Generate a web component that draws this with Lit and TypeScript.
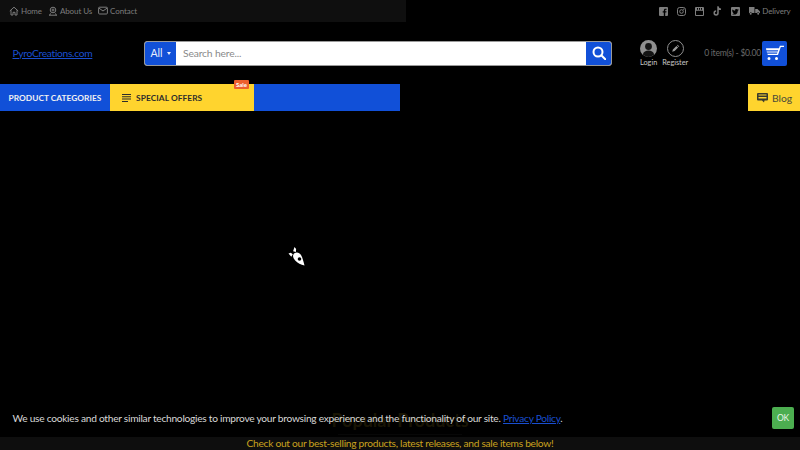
import { LitElement, html, css } from "lit";
import { customElement } from "lit/decorators.js";

@customElement("app-root")
export class AppRoot extends LitElement {
  static styles = css`
    :host { display: block; width: 800px; height: 450px; background: #000; overflow: hidden; position: relative; font-family: Lato, sans-serif; color: #888; }
    svg { display: block; flex: none; }
    a { text-decoration: none; color: inherit; }
    .top { display: flex; justify-content: space-between; height: 22px; }
    .top-left { width: 406px; background: #0f0f0f; display: flex; align-items: center; padding-left: 9px; gap: 6px; box-sizing: border-box; }
    .top-item { display: flex; align-items: center; gap: 2px; font-size: 8px; letter-spacing: -0.1px; color: #7d7d7d; padding-bottom: 1px; }
    .top-right { display: flex; align-items: center; gap: 9px; padding-right: 9.5px; color: #7d7d7d; }
    .top-right .delivery { display: flex; align-items: center; gap: 2px; font-size: 8px; letter-spacing: -0.15px; }
    .header { height: 62px; display: flex; align-items: center; }
    .logo { width: 144px; flex: none; padding-left: 12.5px; box-sizing: border-box; font-size: 10.3px; letter-spacing: -0.33px; color: #1a4fd0; text-decoration: underline; }
    .search { width: 468px; flex: none; height: 25px; border: 1px solid #9a9a9a; border-radius: 3px; box-sizing: border-box; display: flex; overflow: hidden; background: #fff; }
    .cat { width: 31px; background: #1150d8; color: #e8eefc; font-size: 10.5px; display: flex; align-items: center; justify-content: center; gap: 4px; }
    .caret { width: 0; height: 0; border-left: 2.5px solid transparent; border-right: 2.5px solid transparent; border-top: 3px solid #e8eefc; }
    .field { flex: 1; color: #8a8a8a; font-size: 10.3px; letter-spacing: -0.15px; display: flex; align-items: center; padding-left: 7px; }
    .go { width: 25px; background: #1150d8; display: flex; align-items: center; justify-content: center; }
    .account { display: flex; gap: 5px; margin-left: 28px; flex: none; }
    .acc { display: flex; flex-direction: column; align-items: center; font-size: 7.3px; color: #c8c8c8; gap: 1px; }
    .cart { display: flex; align-items: center; flex: 1; justify-content: flex-end; padding-right: 13px; font-size: 8.6px; letter-spacing: -0.27px; color: #6a6a6a; white-space: nowrap; }
    .cart-btn { width: 25px; height: 25px; background: #1150d8; border-radius: 2px; display: flex; align-items: center; justify-content: center; margin-left: 1px; }
    .nav { height: 27px; display: flex; justify-content: space-between; }
    .nav-left { width: 400px; background: #1150d8; display: flex; }
    .pc { width: 110px; display: flex; align-items: center; justify-content: center; color: #f2f2f2; font-size: 8.3px; font-weight: 700; letter-spacing: 0.05px; white-space: nowrap; }
    .so { width: 144px; background: #ffd42e; display: flex; align-items: center; padding-left: 12px; gap: 5px; box-sizing: border-box; color: #2c2c2c; font-size: 8.3px; font-weight: 700; letter-spacing: 0.1px; position: relative; }
    .sale { position: absolute; top: -4px; right: 5px; background: #ed5f2e; color: #fff; font-size: 6px; padding: 0 2px; line-height: 9px; border-radius: 1px; letter-spacing: 0; }
    .blog { width: 52px; background: #ffd42e; display: flex; align-items: center; justify-content: center; gap: 4px; color: #4a4a3a; font-size: 10.3px; padding-left: 1px; box-sizing: border-box; }
    .main { height: 326px; display: flex; justify-content: center; align-items: center; padding-right: 208px; box-sizing: border-box; padding-bottom: 35px; }
    .bottom-copy { height: 13px; background: #0e0e0e; color: #c9a21e; font-size: 10.2px; letter-spacing: -0.27px; text-align: center; line-height: 13px; white-space: nowrap; }
    .cookie { position: absolute; left: 0; right: 0; top: 398px; height: 39px; background: rgba(0,0,0,0.85); border-radius: 0 0 6px 6px; display: flex; align-items: center; justify-content: space-between; padding: 0 6px 0 12.5px; box-sizing: border-box; color: #d8d8d8; font-size: 10.2px; letter-spacing: -0.265px; }
    .cookie a { color: #1a4fd0; text-decoration: underline; }
    .ok { background: #4cae50; color: #e8f5e9; width: 22px; height: 22px; border-radius: 2px; font-size: 8.5px; display: flex; align-items: center; justify-content: center; }
    .ghost { position: absolute; left: 0; right: 0; top: 409px; text-align: center; color: #a88a20; font-size: 18px; font-weight: 700; }
    .rule { position: absolute; left: 338px; top: 434px; width: 124px; height: 1px; background: #333; }
  `;

  private home = html`<svg width="10" height="10" viewBox="0 0 10 10" fill="none" stroke="currentColor" stroke-width="1"><path d="M.8 5 5 1.200 9.200 5M2 4.200V9h2V6.300h2V9h2V4.200"/></svg>`;
  private about = html`<svg width="10" height="10" viewBox="0 0 10 10" fill="none" stroke="currentColor" stroke-width="1"><circle cx="5" cy="4" r="2.800"/><circle cx="5" cy="4" r="1"/><path d="M1 9.200h8M2.500 7.400l-.8 1.800M7.500 7.400l.8 1.800"/></svg>`;
  private mail = html`<svg width="10" height="9" viewBox="0 0 10 9" fill="none" stroke="currentColor" stroke-width="1"><rect x=".6" y="1.200" width="8.800" height="6.800" rx="1"/><path d="m.8 2 4.200 3 4.200-3"/></svg>`;

  render() {
    return html`
      <div class="top">
        <div class="top-left">
          <a class="top-item">${this.home}Home</a>
          <a class="top-item">${this.about}About Us</a>
          <a class="top-item">${this.mail}Contact</a>
        </div>
        <div class="top-right">
          <svg width="9" height="9" viewBox="0 0 9 9"><path fill="currentColor" fill-rule="evenodd" d="M1 0h7a1 1 0 0 1 1 1v7a1 1 0 0 1-1 1H6.200V5.600h1.100l.2-1.300H6.200V3.500c0-.4.2-.7.700-.7h.7V1.700H6.500c-1.100 0-1.700.7-1.700 1.700v.9H3.700v1.300h1.100V9H1a1 1 0 0 1-1-1V1a1 1 0 0 1 1-1z"/></svg>
          <svg width="9" height="9" viewBox="0 0 9 9" fill="none" stroke="currentColor" stroke-width="1"><rect x=".5" y=".5" width="8" height="8" rx="2.200"/><circle cx="4.500" cy="4.500" r="1.800"/><circle cx="6.800" cy="2.200" r=".3"/></svg>
          <svg width="9" height="9" viewBox="0 0 9 9"><path fill="currentColor" fill-rule="evenodd" d="M1 0h7a1 1 0 0 1 1 1v7a1 1 0 0 1-1 1H1a1 1 0 0 1-1-1V1a1 1 0 0 1 1-1zm0 4.200v3.300a.5.500 0 0 0 .5.500h6a.5.500 0 0 0 .5-.5V4.200a.5.500 0 0 0-.5-.5h-6a.5.500 0 0 0-.5.500zM2 1v1.800h1V1zm2 0v1.800h1V1zm2 0v1.800h1V1z"/></svg>
          <svg width="9" height="10" viewBox="0 0 9 10" fill="none" stroke="currentColor" stroke-width="1.500"><path d="M5 .3v6.700a1.900 1.900 0 1 1-1.900-1.900M5 .8c.2 1.500 1.300 2.400 3 2.500"/></svg>
          <svg width="9" height="9" viewBox="0 0 9 9"><path fill="currentColor" fill-rule="evenodd" d="M1 0h7a1 1 0 0 1 1 1v7a1 1 0 0 1-1 1H1a1 1 0 0 1-1-1V1a1 1 0 0 1 1-1zm6.600 2.600c-.3.100-.5.200-.8.200.3-.2.500-.4.600-.8-.3.200-.6.300-.9.400a1.400 1.400 0 0 0-2.400 1.300C2.900 3.600 2 3.100 1.400 2.400c-.4.700-.2 1.400.4 1.900-.2 0-.4-.1-.6-.2 0 .7.400 1.200 1.100 1.400-.2.100-.4.100-.6 0 .2.600.7.900 1.300 1-.6.400-1.200.6-2 .5 2.600 1.500 5.800.1 5.800-3.300.3-.2.600-.4.800-.7z"/></svg>
          <span class="delivery"><svg width="11" height="10" viewBox="0 0 11 10"><path fill="currentColor" d="M0 1h5.500v6H2.800a1.200 1.200 0 0 0-2.200 0H0zM6.200 3h2.300L11 5.500V7h-.6a1.300 1.300 0 0 0-2.400 0H6.200z"/><circle cx="1.700" cy="7.800" r="1" fill="currentColor"/><circle cx="9.200" cy="7.800" r="1" fill="currentColor"/></svg>Delivery</span>
        </div>
      </div>
      <div class="header">
        <a class="logo">PyroCreations.com</a>
        <div class="search">
          <div class="cat">All<span class="caret"></span></div>
          <div class="field">Search here...</div>
          <div class="go"><svg width="14" height="14" viewBox="0 0 14 14" fill="none" stroke="#fff" stroke-width="2"><circle cx="6" cy="6" r="4.500"/><path d="m9.300 9.300 4 4" stroke-linecap="round"/></svg></div>
        </div>
        <div class="account">
          <a class="acc"><svg width="17" height="17" viewBox="0 0 17 17"><circle cx="8.500" cy="8.500" r="8.500" fill="#8f8f8f"/><circle cx="8.500" cy="6.500" r="3.400" fill="#141414"/><path d="M2.800 14.500c.8-3 3-4 5.700-4s4.900 1 5.700 4a8 8 0 0 1-11.400 0z" fill="#141414"/></svg>Login</a>
          <a class="acc"><svg width="17" height="17" viewBox="0 0 17 17"><circle cx="8.500" cy="8.500" r="8" fill="none" stroke="#8f8f8f"/><path d="m5.200 11.800.7-2.400 3.500-3.500 1.700 1.700-3.500 3.500zM10 5.300l.6-.6 1.700 1.700-.6.600z" fill="#9a9a9a"/></svg>Register</a>
        </div>
        <div class="cart">0 item(s) - $0.00<div class="cart-btn"><svg width="19" height="16" viewBox="0 0 19 16"><path fill="#fff" d="M1 3.200h13l.9-2.500H19v1.200h-3.200L13 10H2.800l-.5-1.300h9.700l.4-1.100H2L1.600 6.400h11.200l.4-1.100H1.300zM4 12a1.500 1.500 0 1 1 0 3 1.500 1.500 0 0 1 0-3zm7.500 0a1.500 1.500 0 1 1 0 3 1.500 1.500 0 0 1 0-3z"/></svg></div></div>
      </div>
      <div class="nav">
        <div class="nav-left">
          <div class="pc">PRODUCT CATEGORIES</div>
          <div class="so"><svg width="9" height="8" viewBox="0 0 9 8" fill="#2c2c2c"><path d="M0 0h9v1H0zM0 2.300h9v1H0zM0 4.600h9v1H0zM0 6.900h6v1H0z"/></svg>SPECIAL OFFERS<span class="sale">Sale</span></div>
        </div>
        <div class="blog"><svg width="11" height="11" viewBox="0 0 11 11"><path fill="#3a3a2e" fill-rule="evenodd" d="M1 1h9a1 1 0 0 1 1 1v5.500a1 1 0 0 1-1 1H7.500l-.5 2-2-2H1a1 1 0 0 1-1-1V2a1 1 0 0 1 1-1zm.5 1.500v1h8v-1zm0 2.500v1.500h8V5z"/></svg>Blog</div>
      </div>
      <div class="main">
        <svg width="18" height="21" viewBox="0 0 18 21"><g fill="#fff"><path d="M7 7.500c2.500-1.800 5.500-1 7 1.500 1.700 3 2.500 6.500 3.500 10.500-3.500-1-7-2.500-9.300-5.100C6 12.100 5.300 9.500 7 7.500z"/><path d="M1.500 7.500 3.800 6.800l2 1.500-1.500 2.400zM7.500 1l1.600 2-.2 3-2.800-.8z"/></g><circle cx="12.500" cy="13" r="1.800" fill="#000"/></svg>
      </div>
      <div class="ghost">Popular Products</div>
      <div class="rule"></div>
      <div class="bottom-copy">Check out our best-selling products, latest releases, and sale items below!</div>
      <div class="cookie">
        <span>We use cookies and other similar technologies to improve your browsing experience and the functionality of our site. <a>Privacy Policy</a>.</span>
        <div class="ok">OK</div>
      </div>
    `;
  }
}
